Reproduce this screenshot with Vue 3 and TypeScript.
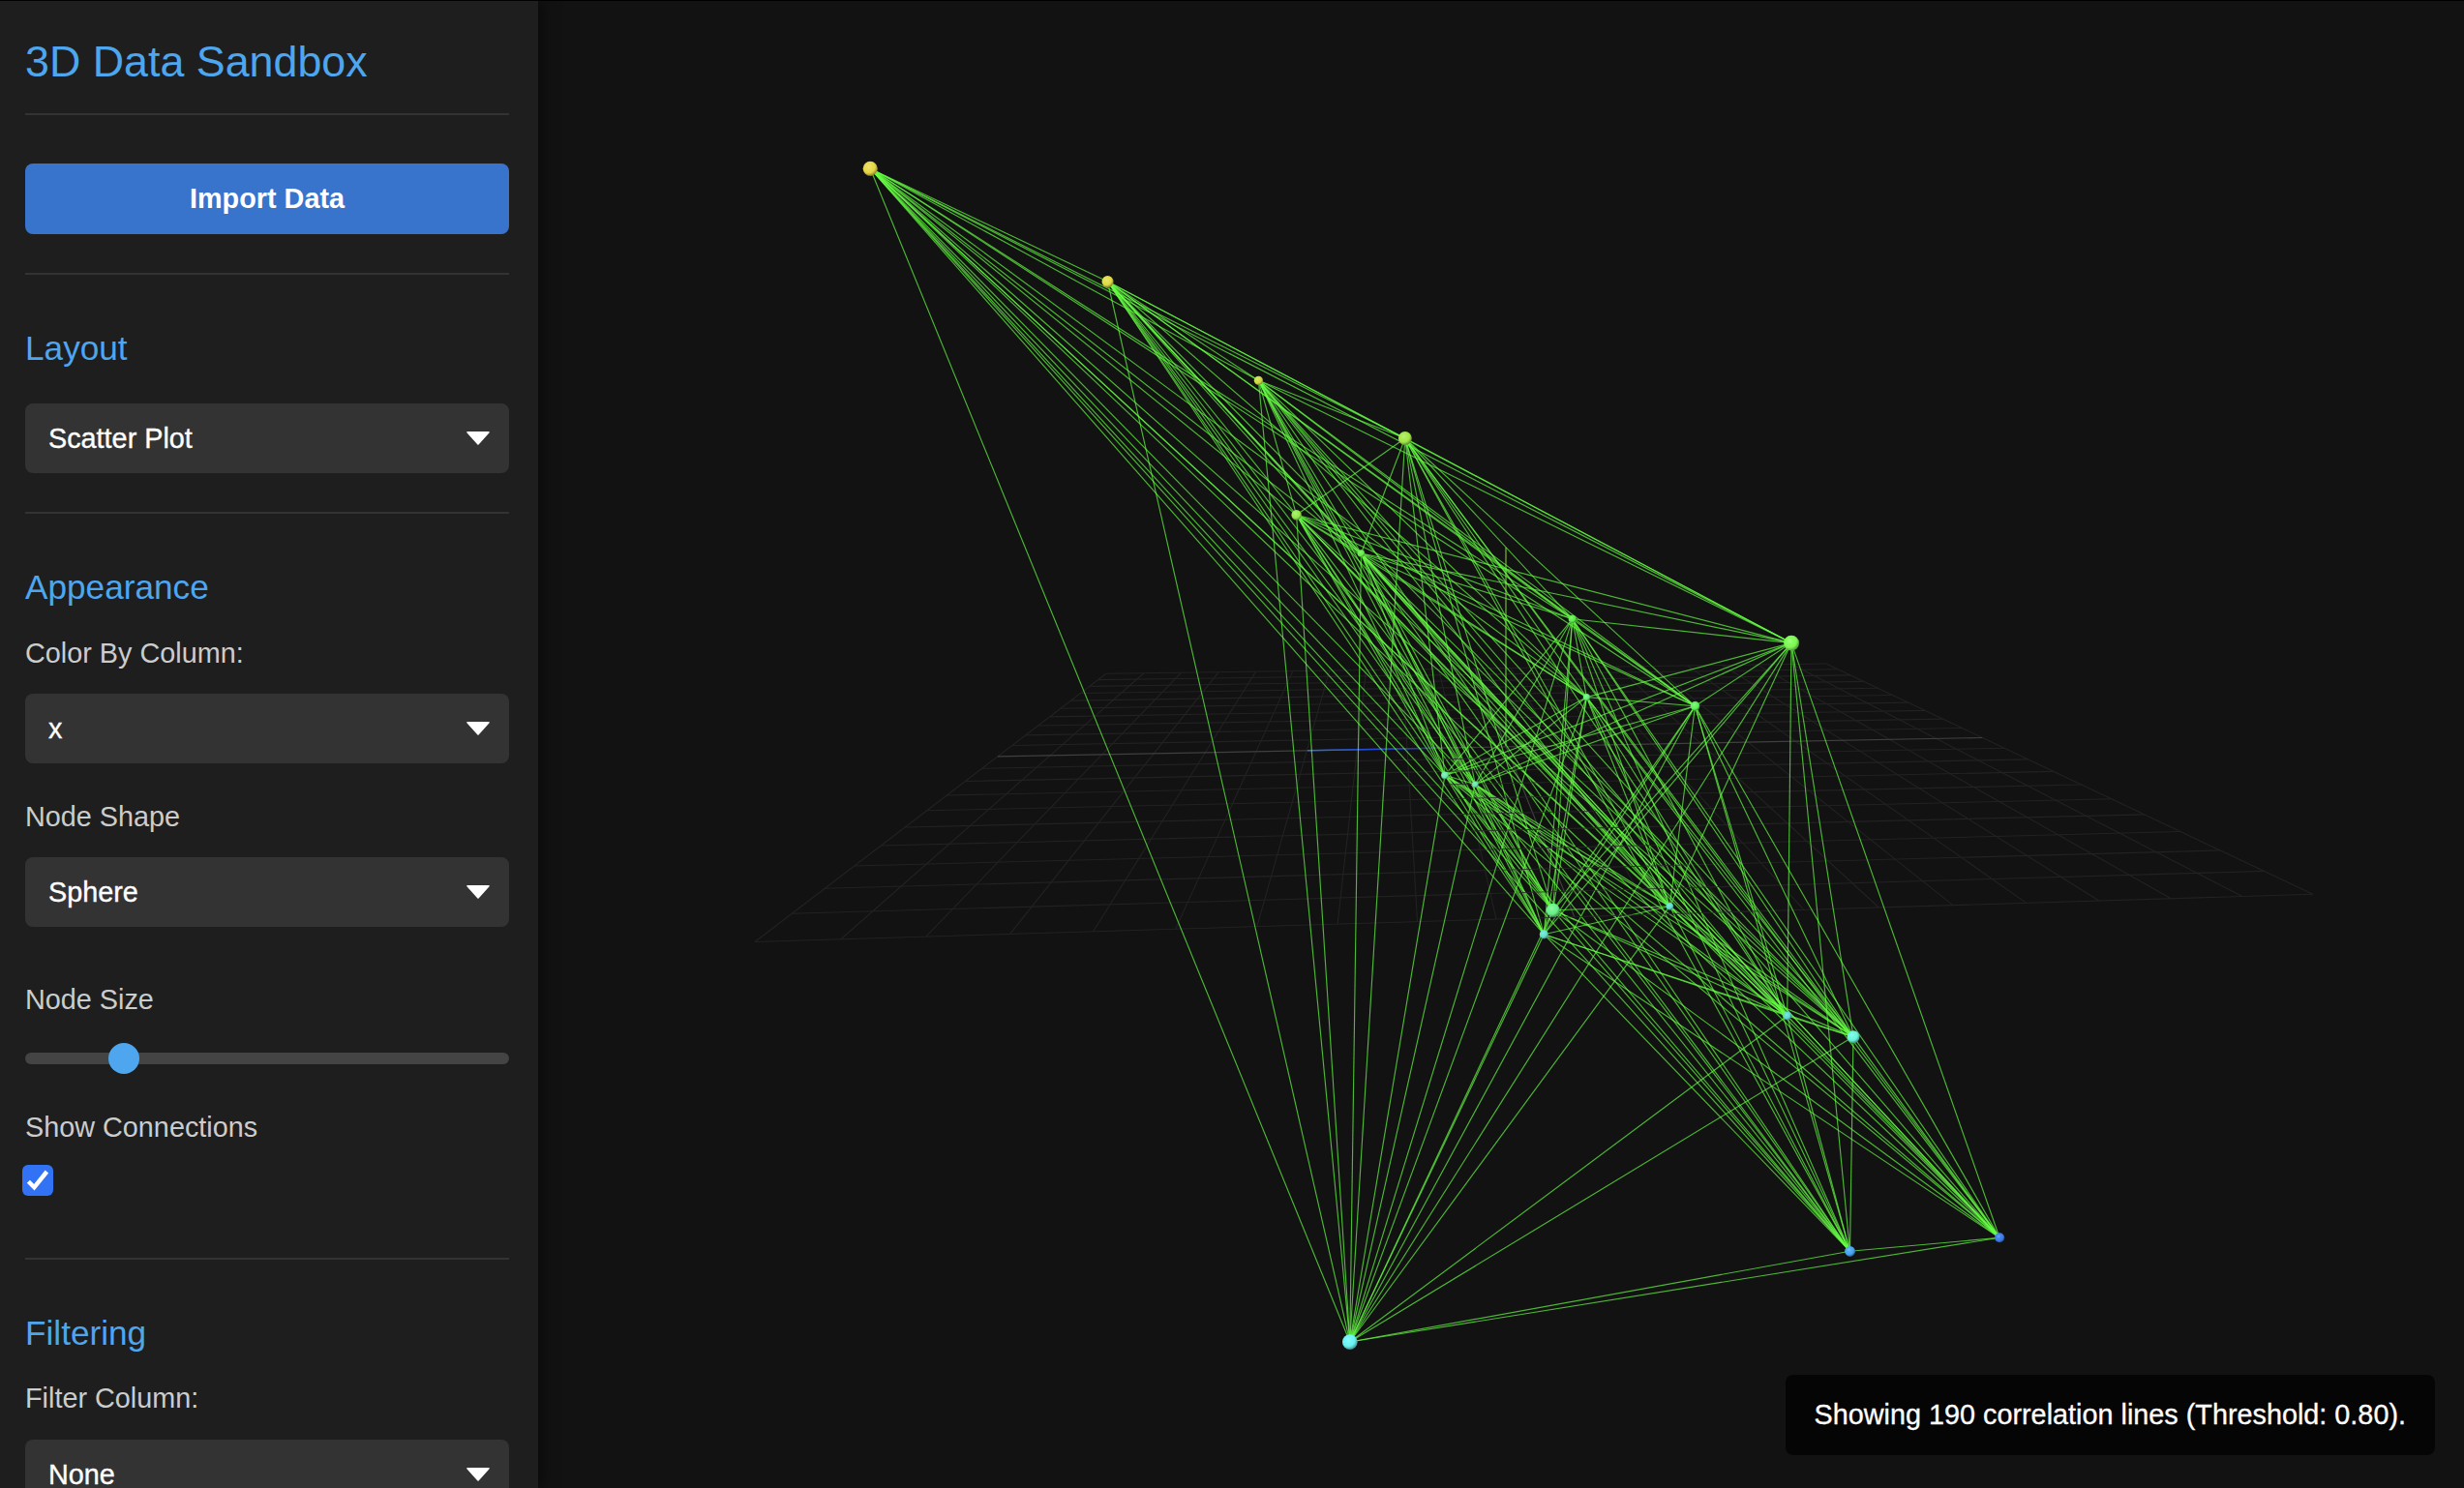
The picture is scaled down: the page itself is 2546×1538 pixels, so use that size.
<script setup lang="ts">
import { computed, ref } from 'vue'

interface DataNode {
  x: number
  y: number
  r: number
  color: string
}

interface Segment {
  x1: number
  y1: number
  x2: number
  y2: number
}

const nodes: DataNode[] = [
  { x: 899.2, y: 174.2, r: 7.5, color: '#e8d94a' },
  { x: 1144.5, y: 291, r: 6, color: '#e2dd48' },
  { x: 1300.4, y: 393.3, r: 4.6, color: '#cfdc48' },
  { x: 1451.8, y: 453, r: 6.9, color: '#a6ea4c' },
  { x: 1339.6, y: 532.2, r: 5.2, color: '#98ec50' },
  { x: 1406.4, y: 572, r: 3.8, color: '#6aee4c' },
  { x: 1624.7, y: 639.8, r: 4.1, color: '#62f050' },
  { x: 1851, y: 664.6, r: 7.9, color: '#80fb56' },
  { x: 1639.4, y: 720.6, r: 3.6, color: '#66f47a' },
  { x: 1751.5, y: 729.8, r: 4.8, color: '#62f45e' },
  { x: 1493, y: 801.3, r: 3.9, color: '#72ecb0' },
  { x: 1524.3, y: 810.7, r: 3.3, color: '#70e8b0' },
  { x: 1604.7, y: 940.8, r: 7, color: '#6cf48c' },
  { x: 1595.3, y: 965.7, r: 4.5, color: '#66e6d2' },
  { x: 1725.3, y: 936.7, r: 3.8, color: '#62e2d2' },
  { x: 1846.7, y: 1050, r: 4.2, color: '#60dcdc' },
  { x: 1915, y: 1071.6, r: 6.4, color: '#6cf6e0' },
  { x: 1911.5, y: 1293.3, r: 5.4, color: '#4aa8f6' },
  { x: 2066.1, y: 1279.3, r: 5, color: '#3f80ee' },
  { x: 1394.8, y: 1387, r: 7.8, color: '#6cf6f6' },
]

const links = computed<Segment[]>(() => {
  const out: Segment[] = []
  for (let i = 0; i < nodes.length; i++) {
    for (let j = i + 1; j < nodes.length; j++) {
      out.push({ x1: nodes[i].x, y1: nodes[i].y, x2: nodes[j].x, y2: nodes[j].y })
    }
  }
  return out
})

// Ground plane corners: back left, back right, front right, front left
const corners = [
  [1143, 696.3],
  [1886.9, 686],
  [2389.8, 924.3],
  [780, 973.5],
]

// Projective map from the unit square to the ground plane on screen
const [[ax, ay], [bx, by], [cx, cy], [dx, dy]] = corners
const sx = ax - bx + cx - dx
const sy = ay - by + cy - dy
const det = (bx - cx) * (dy - cy) - (dx - cx) * (by - cy)
const g = (sx * (dy - cy) - (dx - cx) * sy) / det
const h = ((bx - cx) * sy - sx * (by - cy)) / det

function project(u: number, v: number): [number, number] {
  const w = g * u + h * v + 1
  return [
    ((bx - ax + g * bx) * u + (dx - ax + h * dx) * v + ax) / w,
    ((by - ay + g * by) * u + (dy - ay + h * dy) * v + ay) / w,
  ]
}

function segment(u1: number, v1: number, u2: number, v2: number): Segment {
  const [x1, y1] = project(u1, v1)
  const [x2, y2] = project(u2, v2)
  return { x1, y1, x2, y2 }
}

const divisions = 20
const steps = Array.from({ length: divisions + 1 }, (_, i) => i / divisions)
const rows = steps.filter((t) => t !== 0.5).map((t) => segment(0, t, 1, t))
const columns = steps.filter((t) => t !== 0.5).map((t) => segment(t, 0, t, 1))
const gridLines = [...rows, ...columns]
const middleLines = [segment(0, 0.5, 1, 0.5), segment(0.5, 0, 0.5, 1)]

const layout = ref('Scatter Plot')
const colorBy = ref('x')
const shape = ref('Sphere')
const filterColumn = ref('None')
const nodeSize = ref(20.4)
const showConnections = ref(true)
</script>

<template>
  <div class="app">
    <aside class="sidebar">
      <h1 class="title">3D Data Sandbox</h1>
      <hr class="rule rule-title" />
      <button class="import" type="button">Import Data</button>
      <hr class="rule rule-section" />

      <section class="group">
        <h2 class="heading">Layout</h2>
        <div class="select after-heading">
          <span>{{ layout }}</span>
          <svg class="caret" viewBox="0 0 24 14"><path d="M1 .8H23L12 13Z" /></svg>
        </div>
      </section>
      <hr class="rule rule-section" />

      <section class="group">
        <h2 class="heading">Appearance</h2>
        <div class="label label-first">Color By Column:</div>
        <div class="select">
          <span>{{ colorBy }}</span>
          <svg class="caret" viewBox="0 0 24 14"><path d="M1 .8H23L12 13Z" /></svg>
        </div>
        <div class="label label-shape">Node Shape</div>
        <div class="select">
          <span>{{ shape }}</span>
          <svg class="caret" viewBox="0 0 24 14"><path d="M1 .8H23L12 13Z" /></svg>
        </div>
        <div class="label label-size">Node Size</div>
        <div class="slider">
          <div class="track"></div>
          <div class="thumb" :style="{ left: nodeSize + '%' }"></div>
        </div>
        <div class="label label-connections">Show Connections</div>
        <div class="checkbox" @click="showConnections = !showConnections">
          <svg v-if="showConnections" viewBox="0 0 32 32"><path d="M6.4 17.2L12.4 23.2L25.4 7" /></svg>
        </div>
      </section>
      <hr class="rule rule-filter" />

      <section class="group">
        <h2 class="heading">Filtering</h2>
        <div class="label label-filter">Filter Column:</div>
        <div class="select">
          <span>{{ filterColumn }}</span>
          <svg class="caret" viewBox="0 0 24 14"><path d="M1 .8H23L12 13Z" /></svg>
        </div>
      </section>
    </aside>

    <main class="viewport">
      <svg class="scene" viewBox="556 0 1990 1537">
        <defs>
          <radialGradient id="shade" cx=".4" cy=".36" r=".68">
            <stop offset="0" stop-color="#fff" stop-opacity=".25" />
            <stop offset=".4" stop-color="#fff" stop-opacity="0" />
            <stop offset=".65" stop-color="#000" stop-opacity=".04" />
            <stop offset="1" stop-color="#000" stop-opacity=".45" />
          </radialGradient>
          <linearGradient id="axis-y" gradientUnits="userSpaceOnUse" x1="1556" y1="566" x2="1556" y2="771">
            <stop offset="0" stop-color="#6d9430" />
            <stop offset="1" stop-color="#3f9a28" />
          </linearGradient>
          <linearGradient id="axis-z" gradientUnits="userSpaceOnUse" x1="1351" y1="776" x2="1484" y2="773">
            <stop offset="0" stop-color="#2b72d4" />
            <stop offset=".5" stop-color="#2448d8" />
            <stop offset="1" stop-color="#1c34a0" />
          </linearGradient>
          <clipPath id="front">
            <path d="M1490 770L1530 770L1740 890L1830 950L1590 950L1500 830Z" />
          </clipPath>
        </defs>

        <g class="grid">
          <line v-for="(l, i) in gridLines" :key="i" v-bind="l" />
        </g>
        <g class="middle">
          <line v-for="(l, i) in middleLines" :key="i" v-bind="l" />
        </g>
        <line x1="1351" y1="775.8" x2="1484" y2="773.3" stroke="url(#axis-z)" stroke-width="1.4" />
        <path d="M1556 566V771" stroke="url(#axis-y)" stroke-width="1.5" />

        <g v-if="showConnections" class="links">
          <line v-for="(l, i) in links" :key="i" v-bind="l" />
        </g>
        <g class="grid front" clip-path="url(#front)">
          <line v-for="(l, i) in rows" :key="i" v-bind="l" />
        </g>

        <g v-for="(n, i) in nodes" :key="i">
          <circle :cx="n.x" :cy="n.y" :r="n.r" :fill="n.color" />
          <circle :cx="n.x" :cy="n.y" :r="n.r" fill="url(#shade)" />
        </g>
      </svg>
      <div class="status">Showing 190 correlation lines (Threshold: 0.80).</div>
    </main>
  </div>
</template>

<style>
body {
  margin: 0;
  background: #121212;
  overflow: hidden;
}
</style>

<style scoped>
.app {
  display: flex;
  width: 2546px;
  height: 1538px;
  box-sizing: border-box;
  overflow: hidden;
  background: #121212;
  border-top: 1px solid #000;
  font-family: 'Liberation Sans', Arial, sans-serif;
  font-size: 28.8px;
  line-height: 32px;
}

.sidebar {
  position: relative;
  z-index: 1;
  flex: none;
  width: 556px;
  height: 1537px;
  box-sizing: border-box;
  padding: 36px 30px 0 26px;
  overflow: hidden;
  background: #1e1e1e;
  box-shadow: 4px 0 14px rgba(0, 0, 0, 0.5);
}

.title,
.heading {
  margin: 0;
  font-weight: 400;
  color: #4da6ee;
}

.title {
  font-size: 44.8px;
  line-height: 52px;
}

.heading {
  font-size: 35.2px;
  line-height: 40px;
}

.rule {
  height: 2px;
  margin: 0;
  border: 0;
  background: #333;
}

.rule-title {
  margin: 28px 0 50px;
}

.rule-section {
  margin: 40px 0 56px;
}

.rule-filter {
  margin: 64px 0 56px;
}

.import {
  display: flex;
  align-items: center;
  justify-content: center;
  width: 100%;
  height: 73px;
  box-sizing: border-box;
  padding: 0 0 2px;
  border: 0;
  border-radius: 8px;
  background: #3873cc;
  color: #fff;
  font: bold 28.8px/32px 'Liberation Sans', Arial, sans-serif;
}

.select {
  display: flex;
  align-items: center;
  justify-content: space-between;
  height: 72px;
  box-sizing: border-box;
  padding: 0 20px 0 24px;
  border-radius: 8px;
  background: #333;
  color: #fff;
  -webkit-text-stroke: 0.35px #fff;
}

.after-heading {
  margin-top: 37px;
}

.caret {
  width: 24px;
  height: 14px;
  fill: #fff;
  stroke: #fff;
  stroke-width: 1.6;
  stroke-linejoin: round;
}

.label {
  color: #ccc;
}

.label-first {
  margin: 32px 0 26px;
}

.label-shape {
  margin: 39px 0 26px;
}

.label-size {
  margin: 59px 0 29px;
}

.label-connections {
  margin: 39px 0 23px;
}

.label-filter {
  margin: 31px 0 27px;
}

.slider {
  position: relative;
  display: flex;
  align-items: center;
  height: 32px;
}

.track {
  width: 100%;
  height: 12px;
  border-radius: 6px;
  background: #444;
}

.thumb {
  position: absolute;
  top: 0;
  width: 32px;
  height: 32px;
  margin-left: -16px;
  border-radius: 50%;
  background: #4da6ee;
}

.checkbox {
  width: 32px;
  height: 32px;
  margin-left: -3px;
  border-radius: 6px;
  background: #3273f6;
}

.checkbox svg {
  display: block;
  fill: none;
  stroke: #fff;
  stroke-width: 4.4;
}

.viewport {
  position: relative;
  flex: 1;
  min-width: 0;
}

.scene {
  display: block;
  width: 1990px;
  height: 1537px;
}

.grid line {
  stroke: #222;
  stroke-width: 1.1;
}

.middle line {
  stroke: #404040;
  stroke-width: 1.2;
}

.front {
  opacity: 0.75;
}

.links line {
  stroke: #66ff44;
  stroke-opacity: 0.7;
  stroke-width: 1.15;
}

.scene > * {
  transform: translateY(-1px);
}

.status {
  position: absolute;
  right: 30px;
  bottom: 34px;
  height: 83px;
  box-sizing: border-box;
  padding: 25px 30px 0;
  border-radius: 8px;
  background: rgba(0, 0, 0, 0.72);
  color: #fff;
  white-space: nowrap;
  -webkit-text-stroke: 0.3px #fff;
}
</style>
